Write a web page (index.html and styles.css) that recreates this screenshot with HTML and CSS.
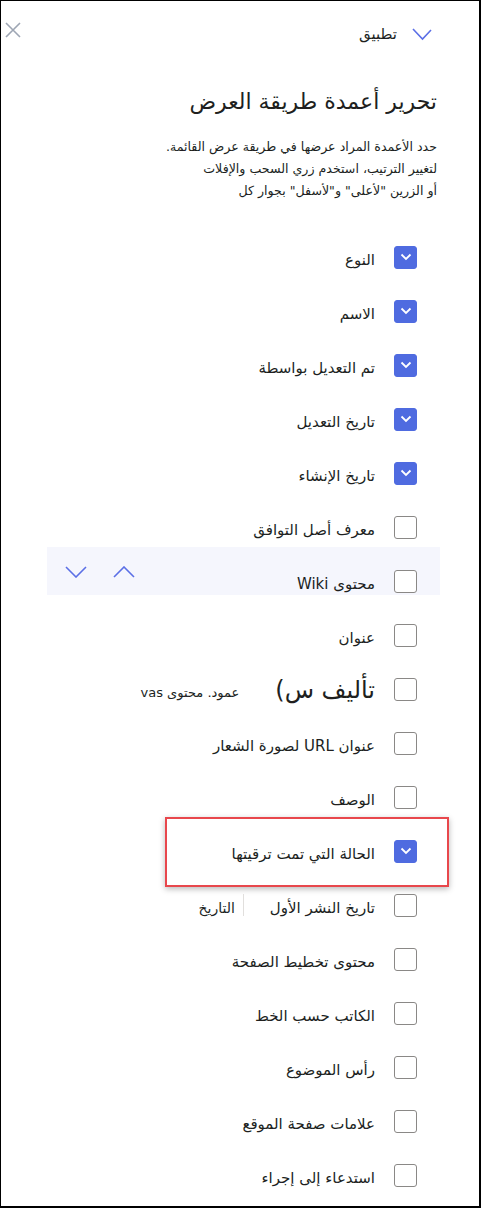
FILE: index.html
```html
<!DOCTYPE html>
<html lang="ar">
<head>
<meta charset="utf-8">
<title>تحرير أعمدة طريقة العرض</title>
<link rel="stylesheet" href="styles.css">
</head>
<body>
<div class="panel">
  <div class="topbar">
    <button class="close" aria-label="إغلاق">
      <svg width="16" height="16" viewBox="0 0 16 16"><path d="M1 1L15 15M15 1L1 15" stroke="#9ea6b4" stroke-width="1.6" fill="none"/></svg>
    </button>
    <button class="apply">
      <span class="apply-text">تطبيق</span>
      <svg width="20" height="14" viewBox="0 0 20 14"><path d="M1 2L10.5 12L19 3" stroke="#5b6fe6" stroke-width="1.6" fill="none"/></svg>
    </button>
  </div>

  <h1 class="title">تحرير أعمدة طريقة العرض</h1>
  <p class="desc">حدد الأعمدة المراد عرضها في طريقة عرض القائمة.<br>لتغيير الترتيب، استخدم زري السحب والإفلات<br>أو الزرين "لأعلى" و"لأسفل" بجوار كل</p>

  <ul class="cols">
    <li class="row"><span class="box checked"><svg width="12" height="8" viewBox="0 0 12 8"><path d="M1.5 1.5L6 6L10.5 1.5" stroke="#fff" stroke-width="1.8" fill="none"/></svg></span><span class="label">النوع</span></li>
    <li class="row"><span class="box checked"><svg width="12" height="8" viewBox="0 0 12 8"><path d="M1.5 1.5L6 6L10.5 1.5" stroke="#fff" stroke-width="1.8" fill="none"/></svg></span><span class="label">الاسم</span></li>
    <li class="row"><span class="box checked"><svg width="12" height="8" viewBox="0 0 12 8"><path d="M1.5 1.5L6 6L10.5 1.5" stroke="#fff" stroke-width="1.8" fill="none"/></svg></span><span class="label">تم التعديل بواسطة</span></li>
    <li class="row"><span class="box checked"><svg width="12" height="8" viewBox="0 0 12 8"><path d="M1.5 1.5L6 6L10.5 1.5" stroke="#fff" stroke-width="1.8" fill="none"/></svg></span><span class="label">تاريخ التعديل</span></li>
    <li class="row"><span class="box checked"><svg width="12" height="8" viewBox="0 0 12 8"><path d="M1.5 1.5L6 6L10.5 1.5" stroke="#fff" stroke-width="1.8" fill="none"/></svg></span><span class="label">تاريخ الإنشاء</span></li>
    <li class="row"><span class="box"></span><span class="label">معرف أصل التوافق</span></li>
    <li class="row hovered">
      <div class="hover-bg">
        <span class="move"><svg width="22" height="12" viewBox="0 0 22 12"><path d="M1 1L11 11L21 1" stroke="#5b6fe6" stroke-width="1.6" fill="none"/></svg></span>
        <span class="move"><svg width="22" height="12" viewBox="0 0 22 12"><path d="M1 11L11 1L21 11" stroke="#5b6fe6" stroke-width="1.6" fill="none"/></svg></span>
      </div>
      <span class="box"></span><span class="label">محتوى Wiki</span>
    </li>
    <li class="row"><span class="box"></span><span class="label">عنوان</span></li>
    <li class="row"><span class="box"></span><span class="label big">تأليف س)</span><span class="extra small-extra">عمود. محتوى vas</span></li>
    <li class="row"><span class="box"></span><span class="label">عنوان URL لصورة الشعار</span></li>
    <li class="row"><span class="box"></span><span class="label">الوصف</span></li>
    <li class="row flagged">
      <div class="red-box"></div>
      <span class="box checked"><svg width="12" height="8" viewBox="0 0 12 8"><path d="M1.5 1.5L6 6L10.5 1.5" stroke="#fff" stroke-width="1.8" fill="none"/></svg></span><span class="label">الحالة التي تمت ترقيتها</span>
    </li>
    <li class="row"><span class="box"></span><span class="label">تاريخ النشر الأول</span><span class="extra sep-extra">التاريخ</span></li>
    <li class="row"><span class="box"></span><span class="label">محتوى تخطيط الصفحة</span></li>
    <li class="row"><span class="box"></span><span class="label">الكاتب حسب الخط</span></li>
    <li class="row"><span class="box"></span><span class="label">رأس الموضوع</span></li>
    <li class="row"><span class="box"></span><span class="label">علامات صفحة الموقع</span></li>
    <li class="row"><span class="box"></span><span class="label">استدعاء إلى إجراء</span></li>
  </ul>
</div>
</body>
</html>
```

FILE: styles.css
```css
* { box-sizing: border-box; }

html, body {
  margin: 0;
  padding: 0;
  background: #fff;
}

body {
  font-family: "DejaVu Sans", "Liberation Sans", sans-serif;
  color: #201f1e;
}

.panel {
  width: 481px;
  height: 1208px;
  border-top: 1px solid #000;
  border-left: 1px solid #000;
  border-right: 2px solid #000;
  border-bottom: 2px solid #000;
  overflow: hidden;
  background: #fff;
}

.topbar {
  display: flex;
  justify-content: space-between;
  align-items: flex-start;
  padding: 21px 47px 0 4px;
  height: 60px;
}

.close, .apply {
  border: 0;
  background: none;
  padding: 0;
  margin: 0;
  font: inherit;
  color: inherit;
  cursor: pointer;
}

.close svg { display: block; }

.apply {
  display: flex;
  align-items: center;
  gap: 15px;
  margin-top: 3px;
}

.apply svg { display: block; }

.apply-text {
  font-size: 15px;
  line-height: 18px;
  color: #201f1e;
}

.title {
  direction: rtl;
  margin: 25px 0 0;
  padding-right: 42px;
  font-size: 22px;
  line-height: 32px;
  font-weight: normal;
  color: #201f1e;
}

.desc {
  direction: rtl;
  margin: 18px 0 0;
  padding-right: 42px;
  font-size: 12.6px;
  line-height: 22px;
  color: #201f1e;
}

.cols {
  list-style: none;
  margin: 28px 0 0;
  padding: 0;
}

.row {
  position: relative;
  direction: rtl;
  display: flex;
  align-items: center;
  height: 54px;
  padding-right: 62px;
}

.box {
  position: relative;
  z-index: 1;
  flex: none;
  width: 23px;
  height: 23px;
  border: 1px solid #8a8886;
  border-radius: 3px;
  background: #fff;
  display: flex;
  align-items: center;
  justify-content: center;
}

.box.checked {
  background: #4f6be0;
  border-color: #4f6be0;
}

.box svg { display: block; }

.label {
  position: relative;
  z-index: 1;
  margin-right: 19px;
  font-size: 15px;
  line-height: 20px;
  padding-top: 6px;
  white-space: nowrap;
}

.label.big {
  font-size: 24px;
  line-height: 30px;
  padding-top: 2px;
}

.extra {
  position: relative;
  z-index: 1;
  white-space: nowrap;
  font-size: 13px;
  padding-top: 6px;
}

.small-extra {
  margin-right: 36px;
}

.sep-extra {
  margin-right: 26px;
  padding-right: 8px;
  border-right: 1px solid #e1dfdd;
  font-size: 14px;
}

.hover-bg {
  position: absolute;
  top: -7px;
  left: 46px;
  right: 39px;
  height: 48px;
  background: #f5f6fd;
  display: flex;
  direction: ltr;
  align-items: flex-start;
  gap: 26px;
  padding: 19px 0 0 18px;
}

.move svg { display: block; }

.red-box {
  position: absolute;
  top: -7px;
  left: 164px;
  right: 30px;
  height: 70px;
  border: 2px solid #e8474c;
  box-shadow: 0 2px 6px rgba(0, 0, 0, 0.28);
  pointer-events: none;
}
```
